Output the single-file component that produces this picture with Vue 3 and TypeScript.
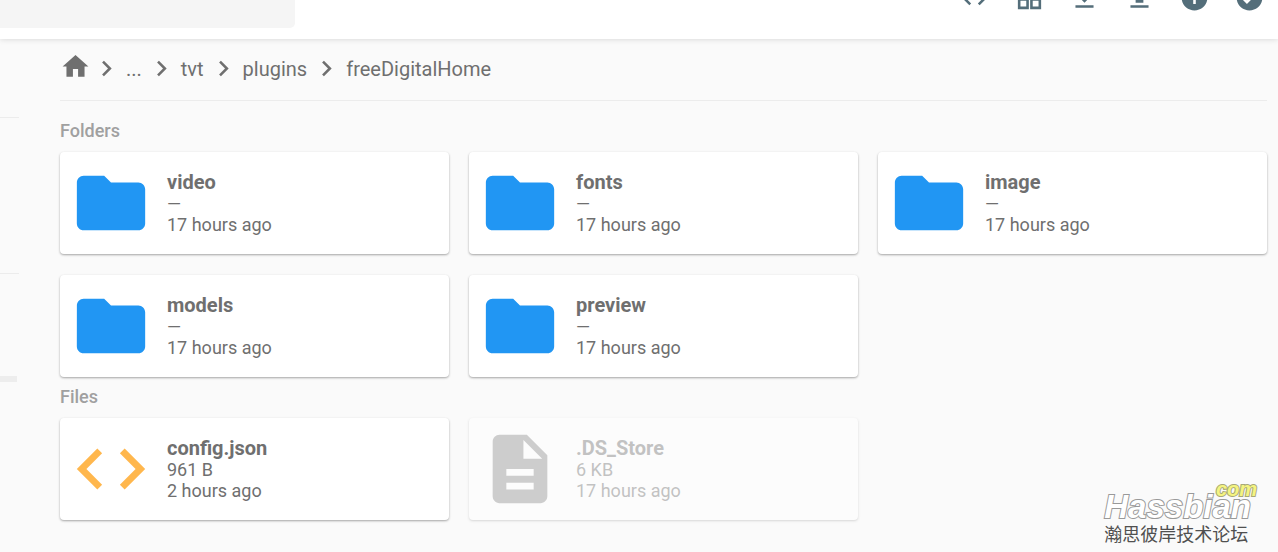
<script setup lang="ts">
interface Entry {
  name: string
  size: string
  modified: string
  icon: 'folder' | 'code' | 'document'
  hidden?: boolean
}

const paths: Record<string, string> = {
  folder: 'M10 4H4c-1.1 0-1.99.9-1.99 2L2 18c0 1.100.9 2 2 2h16c1.100 0 2-.9 2-2V8c0-1.100-.9-2-2-2h-8l-2-2z',
  code: 'M9.400 16.600L4.800 12l4.600-4.600L8 6l-6 6 6 6 1.400-1.400zm5.200 0l4.600-4.600-4.600-4.600L16 6l6 6-6 6-1.400-1.400z',
  document: 'M14 2H6c-1.100 0-1.990.9-1.990 2L4 20c0 1.100.890 2 1.990 2H18c1.100 0 2-.9 2-2V8l-6-6zm2 16H8v-2h8v2zm0-4H8v-2h8v2zm-3-5V3.500L18.500 9H13z',
  home: 'M10 20v-6h4v6h5v-8h3L12 3 2 12h3v8z',
  chevron: 'M8.590 16.590L13.170 12 8.590 7.410 10 6l6 6-6 6z',
}

const actions: { label: string; path: string }[] = [
  { label: 'Toggle shell', path: paths.code },
  {
    label: 'Switch view',
    path: 'M3 3v8.500h8.500V3H3zm6.500 6.500H5V5h4.500v4.500zM3 12.500V21h8.500v-8.500H3zm6.500 6.500H5v-4.500h4.500V19zM12.500 3v8.500H21V3h-8.500zM19 9.500h-4.500V5H19v4.500zm-6.500 3V21H21v-8.500h-8.500zM19 19h-4.500v-4.500H19V19z',
  },
  { label: 'Download', path: 'M19 9h-4V3H9v6H5l7 7 7-7zM5 18v2h14v-2H5z' },
  { label: 'Upload', path: 'M9 16h6v-6h4l-7-7-7 7h4zm-4 2h14v2H5z' },
  {
    label: 'Info',
    path: 'M12 2C6.480 2 2 6.480 2 12s4.480 10 10 10 10-4.480 10-10S17.520 2 12 2zm1 15h-2v-6h2v6zm0-8h-2V7h2v2z',
  },
  {
    label: 'Select multiple',
    path: 'M12 2C6.480 2 2 6.480 2 12s4.480 10 10 10 10-4.480 10-10S17.520 2 12 2zm-2 15l-5-5 1.410-1.410L10 14.170l7.590-7.590L19 8l-9 9z',
  },
]

const crumbs = ['...', 'tvt', 'plugins', 'freeDigitalHome']

const sections: { title: string; entries: Entry[] }[] = [
  {
    title: 'Folders',
    entries: ['video', 'fonts', 'image', 'models', 'preview'].map((name) => ({
      name,
      size: '—',
      modified: '17 hours ago',
      icon: 'folder' as const,
    })),
  },
  {
    title: 'Files',
    entries: [
      { name: 'config.json', size: '961 B', modified: '2 hours ago', icon: 'code' },
      { name: '.DS_Store', size: '6 KB', modified: '17 hours ago', icon: 'document', hidden: true },
    ],
  },
]
</script>

<template>
  <div class="page">
    <header class="topbar">
      <input class="search" type="search" aria-label="Search" />
      <div class="actions">
        <button v-for="a in actions" :key="a.label" type="button" :aria-label="a.label">
          <svg viewBox="0 0 24 24"><path :d="a.path" /></svg>
        </button>
      </div>
    </header>

    <div class="body">
      <aside class="sidebar">
        <hr />
        <hr />
        <div class="usage"></div>
      </aside>

      <main>
        <nav class="breadcrumbs" aria-label="Breadcrumbs">
          <a class="home" href="#" aria-label="Home">
            <svg viewBox="0 0 24 24"><path :d="paths.home" /></svg>
          </a>
          <template v-for="c in crumbs" :key="c">
            <svg viewBox="0 0 24 24"><path :d="paths.chevron" /></svg>
            <a href="#">{{ c }}</a>
          </template>
        </nav>

        <section v-for="s in sections" :key="s.title">
          <h2>{{ s.title }}</h2>
          <div class="grid">
            <a
              v-for="e in s.entries"
              :key="e.name"
              href="#"
              class="card"
              :class="[e.icon, { hidden: e.hidden }]"
            >
              <svg viewBox="0 0 24 24"><path :d="paths[e.icon]" /></svg>
              <div class="details">
                <p class="name">{{ e.name }}</p>
                <p>{{ e.size }}</p>
                <p>{{ e.modified }}</p>
              </div>
            </a>
          </div>
        </section>
      </main>
    </div>

    <div class="watermark">
      <span class="com">com</span>
      <span class="brand">Hassbian</span>
      <span class="forum">瀚思彼岸技术论坛</span>
    </div>
  </div>
</template>

<style>
body {
  margin: 0;
  background: #fafafa;
}
</style>

<style scoped>
.page {
  position: relative;
  min-height: 100vh;
  overflow: hidden;
  font-family: Roboto, 'Liberation Sans', sans-serif;
  font-size: 18px;
  color: #6f6f6f;
}

.page * {
  box-sizing: border-box;
}

svg {
  display: block;
  flex: none;
  width: 31px;
  height: 31px;
  fill: currentColor;
}

a {
  color: inherit;
  text-decoration: none;
}

.topbar {
  position: relative;
  display: flex;
  justify-content: space-between;
  height: 39px;
  background: #fff;
  box-shadow: 0 0 6px rgba(0, 0, 0, 0.16);
}

.search {
  width: 295px;
  height: 28px;
  padding: 0 12px;
  border: 0;
  border-radius: 0 0 5px 0;
  background: #f5f5f5;
  font: inherit;
}

.actions {
  display: flex;
  align-items: flex-end;
  gap: 24px;
  padding: 0 13px 26px 0;
}

.actions button {
  padding: 0;
  border: 0;
  background: none;
  color: #546e7a;
}

.body {
  display: flex;
}

.sidebar {
  flex: none;
  width: 60px;
  padding-top: 78px;
}

.sidebar hr {
  width: 19px;
  height: 1px;
  margin: 0 0 155px;
  border: 0;
  background: #ececec;
}

.sidebar .usage {
  width: 17px;
  height: 6px;
  margin-top: -53px;
  background: #ededed;
}

main {
  flex: 1;
  padding-right: 11px;
}

.breadcrumbs {
  display: flex;
  align-items: center;
  height: 62px;
  padding-bottom: 2px;
  border-bottom: 1px solid #ececec;
  font-size: 20px;
  line-height: 24px;
}

.breadcrumbs a {
  padding: 0 4px;
}

.breadcrumbs .home {
  padding: 0 0 4px;
}

h2 {
  margin: 0;
  padding: 20px 0 11px;
  font-size: 18px;
  line-height: 20px;
  font-weight: 500;
  color: #a0a0a0;
}

section + section h2 {
  padding-top: 10px;
}

.grid {
  display: grid;
  grid-template-columns: repeat(3, 1fr);
  gap: 21px 20px;
}

.card {
  display: flex;
  align-items: center;
  gap: 15px;
  height: 102px;
  padding: 10px;
  border-radius: 4px;
  background: #fff;
  box-shadow: 0 1px 3px rgba(0, 0, 0, 0.12), 0 1px 2px rgba(0, 0, 0, 0.24);
}

.card svg {
  width: 82px;
  height: 82px;
}

.card.folder svg {
  color: #2196f3;
}

.card.code svg {
  color: #ffb74d;
}

.card.document svg {
  color: #8c8c8c;
}

.card.hidden {
  opacity: 0.4;
}

.details p {
  margin: 0;
  line-height: 21px;
}

.details .name {
  font-size: 20px;
  line-height: 22px;
  font-weight: 700;
}

.watermark {
  position: absolute;
  right: 21px;
  bottom: 5px;
  display: flex;
  flex-direction: column;
  align-items: flex-start;
  font-family: 'Liberation Sans', Arial, sans-serif;
  font-style: italic;
  font-weight: 700;
}

.brand {
  padding: 0 6px 3px 0;
  font-size: 33px;
  line-height: 26px;
  color: #fff;
  -webkit-text-stroke: 2px #999;
  paint-order: stroke fill;
}

.com {
  position: relative;
  z-index: 1;
  align-self: flex-end;
  margin-bottom: -1px;
  font-size: 20px;
  line-height: 12px;
  color: #f4f480;
  -webkit-text-stroke: 2px #a8a878;
  paint-order: stroke fill;
}

.forum {
  font-family: 'Liberation Sans', 'Noto Sans CJK SC', sans-serif;
  font-size: 18px;
  line-height: 24px;
  font-style: normal;
  font-weight: 400;
  color: #505050;
}
</style>
